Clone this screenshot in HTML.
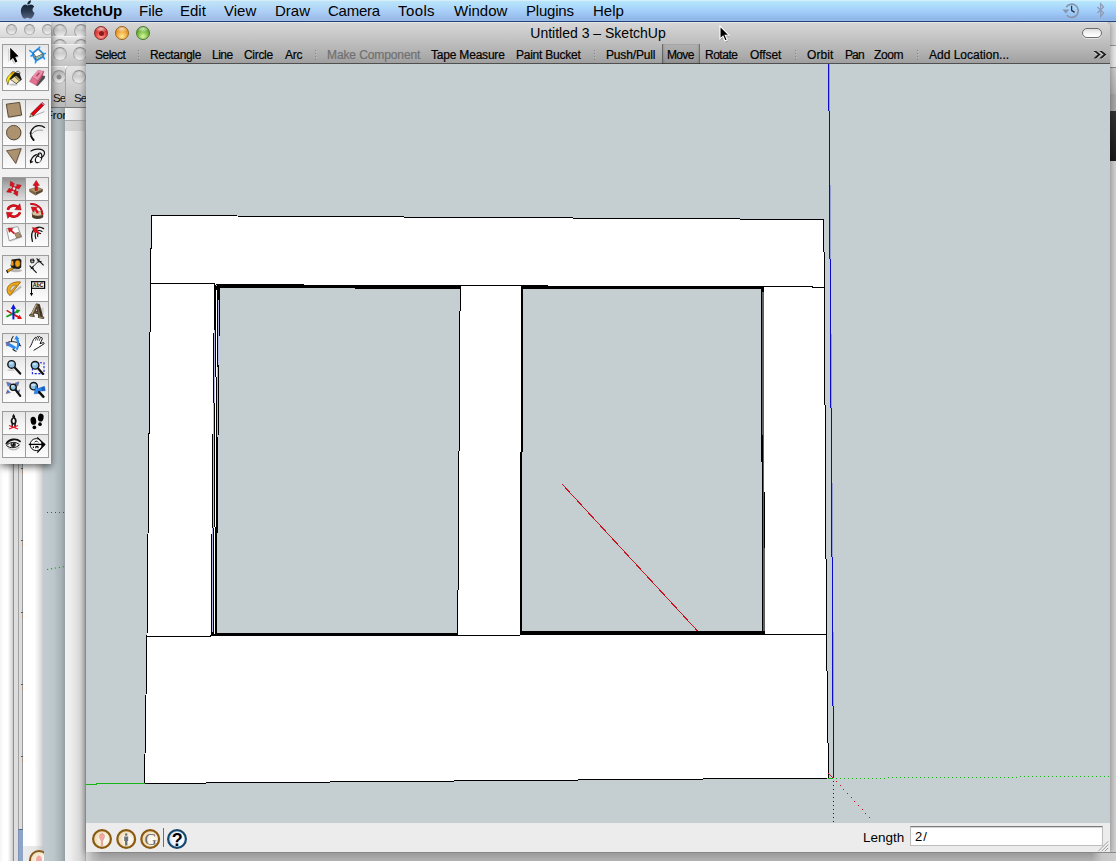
<!DOCTYPE html>
<html lang="en">
<head>
<meta charset="utf-8">
<title>Untitled 3 - SketchUp</title>
<style>
*{box-sizing:border-box;margin:0;padding:0}
html,body{width:1116px;height:861px;overflow:hidden;background:#fff;font-family:"Liberation Sans","DejaVu Sans",sans-serif;color:#000}
.abs{position:absolute}
#stage{position:relative;width:1116px;height:861px;overflow:hidden;background:#fff}
/* ---------- menu bar ---------- */
#menubar{left:0;top:0;width:1116px;height:22px;background:linear-gradient(90deg,rgba(232,216,226,.26) 0,rgba(232,216,226,.2) 18%,rgba(232,216,226,0) 55%),linear-gradient(#e2f5fd 0,#b6e6fb 7%,#acdcfc 28%,#a3cefa 52%,#97c0f0 76%,#8fb6e6 90%,#98bdec 100%);border-bottom:1px solid #21437a;z-index:50}
#menubar span{position:absolute;top:2px;font-size:15px;line-height:18px;white-space:nowrap;color:#000}
#menubar span.b{font-weight:bold}
/* ---------- background windows ---------- */
.bgwin{background:#fff}
/* ---------- main window ---------- */
#main{left:86px;top:22px;width:1024px;height:830px;background:#c5cfd2;box-shadow:0 0 6px 1px rgba(0,0,0,.35);z-index:20;border-radius:5px 5px 0 0;overflow:hidden}
#titlebar{left:0;top:0;width:1024px;height:42px;background:linear-gradient(#d6d6d6 0,#c3c3c3 40%,#b0b0b0 75%,#a0a0a0 100%);border-bottom:1px solid #505050;border-top:1px solid #e6e6e6}
#title{left:0;top:2px;width:1024px;text-align:center;font-size:14px;line-height:16px;color:#000}
.tl{width:14px;height:14px;border-radius:50%;top:3px}
#tbar span{position:absolute;top:24.5px;font-size:12px;letter-spacing:-.33px;line-height:14px;white-space:nowrap;color:#000;-webkit-text-stroke:.2px #000}
#tbar span.dis{color:#707070;-webkit-text-stroke:.2px #707070}
.sep{position:absolute;top:27px;width:2px;height:10px;background:repeating-linear-gradient(180deg,#868686 0,#868686 1px,rgba(0,0,0,0) 1px,rgba(0,0,0,0) 3px) left/1px 100% no-repeat,repeating-linear-gradient(180deg,rgba(0,0,0,0) 0,rgba(0,0,0,0) 1px,rgba(255,255,255,.2) 1px,rgba(255,255,255,.2) 2px,rgba(0,0,0,0) 2px,rgba(0,0,0,0) 3px) right/1px 100% no-repeat}
#canvas{left:0;top:42px;width:1024px;height:759px;background:#c5cfd2;overflow:hidden}
#status{left:0;top:801px;width:1024px;height:29px;background:#ececec}
#status .lbl{left:777px;top:7px;font-size:13.5px;line-height:16px}
#vcb{left:824px;top:3px;width:193px;height:20px;background:#fff;border:1px solid #bdbdbd;border-top:1px solid #7a7a7a;box-shadow:inset 0 1px 1px rgba(0,0,0,.18);font-size:13px;letter-spacing:1px;line-height:19px;padding-left:4px}
/* ---------- palette ---------- */
#palette{left:0;top:22px;width:51px;height:442px;background:#f1f1f1;z-index:30;box-shadow:1px 3px 7px rgba(0,0,0,.55)}
#ptitle{left:0;top:0;width:51px;height:16px;background:linear-gradient(#eeeeee,#d9d9d9);border-bottom:1px solid #c2c2c2;overflow:hidden}
.cell{position:absolute;width:24px;height:24px;border:1px solid #9c9c9c;background:linear-gradient(#e6e6e6 0,#f3f3f3 50%,#fcfcfc 100%)}
.cell svg{position:absolute;left:0;top:0;width:22px;height:22px;overflow:visible}
.gl{width:11px;height:11px;border-radius:50%;border:1px solid #a6a6a6;border-top-color:#8e8e8e;border-bottom-color:#bcbcbc;background:radial-gradient(ellipse 45% 30% at 50% 18%,rgba(255,255,255,.55) 0,rgba(255,255,255,0) 100%),linear-gradient(#b0b0b0 0,#cdcdcd 45%,#f0f0f0 100%)}
</style>
</head>
<body>
<div id="stage">

<!-- BG-START -->
<div id="bgwins" class="abs" style="left:0;top:0;width:1116px;height:861px;z-index:1">
 <!-- far-left window column (under palette) -->
 <div class="abs" style="left:0;top:22px;width:14px;height:839px;background:linear-gradient(90deg,#f4f4f4 0,#ffffff 25%,#ffffff 55%,#d9d9d9 85%,#b5b5b5 100%)"></div>
 <div class="abs" style="left:13px;top:22px;width:10px;height:839px;background:#dddddd;border-left:1px solid #8f8f8f;border-right:1px solid #9a9a9a"></div>
 <div class="abs" style="left:18px;top:22px;width:1px;height:839px;background:#a2a2a2"></div>
 <div class="abs" style="left:18px;top:829px;width:5px;height:32px;background:#8da6c8;border-left:1px solid #7f95b8;border-top:1px solid #5a6e8c"></div>
 <div class="abs" style="left:23px;top:22px;width:21px;height:839px;background:linear-gradient(90deg,#ffffff 0,#ffffff 55%,#e4e4e4 80%,#c4c4c4 100%)"></div>
 <div class="abs" style="left:23px;top:846px;width:21px;height:15px;background:linear-gradient(90deg,#ececec 0,#e6e6e6 60%,#c4c4c4 100%)"></div>
 <div class="abs" style="left:29px;top:850px;width:20px;height:20px;border-radius:50%;border:2px solid #8a5a1c;background:radial-gradient(ellipse 22% 30% at 50% 48%,#f4a8a2 0,#f4a8a2 70%,rgba(244,168,162,0) 100%),radial-gradient(circle at 60% 55%,#ffffff 0,#f6ecd6 50%,#e6d2a4 100%)"></div>
 <!-- ticks -->
 <div class="abs" style="left:21px;top:468px;width:2px;height:1px;background:#555"></div><div class="abs" style="left:22px;top:471px;width:1px;height:3px;background:#c08040;opacity:.55"></div>
 <div class="abs" style="left:21px;top:540px;width:2px;height:1px;background:#555"></div><div class="abs" style="left:22px;top:543px;width:1px;height:3px;background:#c08040;opacity:.55"></div>
 <div class="abs" style="left:21px;top:612px;width:2px;height:1px;background:#555"></div><div class="abs" style="left:22px;top:615px;width:1px;height:3px;background:#c08040;opacity:.55"></div>
 <div class="abs" style="left:21px;top:684px;width:2px;height:1px;background:#555"></div><div class="abs" style="left:22px;top:687px;width:1px;height:3px;background:#c08040;opacity:.55"></div>
 <div class="abs" style="left:21px;top:756px;width:2px;height:1px;background:#555"></div><div class="abs" style="left:22px;top:759px;width:1px;height:3px;background:#c08040;opacity:.55"></div>
 <!-- blue-gray canvas column x44-65 -->
 <div class="abs" style="left:44px;top:108px;width:21px;height:753px;background:linear-gradient(90deg,#c2ccd0 0,#bcc7cb 45%,#a9b4b9 80%,#949fa4 100%)"></div>
 <div class="abs" style="left:47px;top:512px;width:18px;height:1px;background:repeating-linear-gradient(90deg,#d01818 0,#d01818 1px,transparent 1px,transparent 4px)"></div>
 <svg class="abs" style="left:44px;top:560px" width="22" height="14"><line x1="3" y1="9.5" x2="21" y2="6.5" stroke="#14b414" stroke-width="1.2" stroke-dasharray="1.2 2.8"/></svg>
 <!-- white/shadow column x65-86 -->
 <div class="abs" style="left:65px;top:131px;width:21px;height:730px;background:linear-gradient(90deg,#f2f2f2 0,#ececec 30%,#d9d9d9 70%,#c2c2c2 94%,#9a9a9a 100%)"></div>
 <!-- stacked title/toolbars x51-86 -->
 <div class="abs" style="left:51px;top:22px;width:35px;height:15px;background:linear-gradient(#e4e4e4,#cfcfcf)"></div>
 <div class="gl abs" style="left:53px;top:24px;width:14px;height:14px"></div><div class="gl abs" style="left:74px;top:24px;width:14px;height:14px"></div>
 <div class="abs" style="left:51px;top:36px;width:35px;height:9px;background:linear-gradient(#e8e8e8,#cdcdcd);border-top:1px solid #f4f4f4;overflow:hidden"><div class="gl abs" style="left:2px;top:2px;width:14px;height:14px"></div><div class="gl abs" style="left:23px;top:2px;width:14px;height:14px"></div></div>
 <div class="abs" style="left:51px;top:44px;width:35px;height:22px;background:linear-gradient(#e2e2e2,#c2c2c2);border-top:1px solid #f0f0f0"></div>
 <div class="gl abs" style="left:53px;top:47px;width:14px;height:14px"></div><div class="gl abs" style="left:73px;top:47px;width:14px;height:14px"></div>
 <div class="abs" style="left:51px;top:66px;width:14px;height:42px;background:linear-gradient(#dadada,#c6c6c6 60%,#b9b9b9);border-top:1px solid #ececec;border-bottom:1px solid #777"></div>
 <div class="gl abs" style="left:52px;top:70px;width:14px;height:14px;background:radial-gradient(circle at 50% 50%,#8c8c8c 0,#8c8c8c 24%,rgba(0,0,0,0) 34%),linear-gradient(#b0b0b0 0,#cdcdcd 45%,#ececec 100%)"></div>
 <div class="abs" style="left:65px;top:66px;width:21px;height:42px;border-top-left-radius:5px;background:linear-gradient(#e4e4e4,#cecece 55%,#bcbcbc);border-left:1px solid #a4a4a4;border-bottom:1px solid #777"></div>
 <div class="gl abs" style="left:72px;top:70px;width:14px;height:14px"></div>
 <div class="abs" style="left:53px;top:91px;width:12px;overflow:hidden;font-size:11.5px;letter-spacing:-.8px;line-height:14px;color:#111">Se</div>
 <div class="abs" style="left:74px;top:91px;font-size:11.5px;letter-spacing:-.8px;line-height:14px;color:#111">Se</div>
 <div class="abs" style="left:46px;top:108px;width:19px;overflow:hidden;font-size:11px;line-height:14px;color:#111;white-space:nowrap;-webkit-text-stroke:.2px #111">Front</div>
 <div class="abs" style="left:65px;top:108px;width:21px;height:13px;background:linear-gradient(90deg,#f4f4f4,#dcdcdc 70%,#bdbdbd);border-bottom:1px solid #aaa"></div>
 <div class="abs" style="left:65px;top:121px;width:21px;height:10px;background:linear-gradient(90deg,#dadada,#cccccc 70%,#b4b4b4)"></div>
 <!-- right edge strip -->
 <div class="abs" style="left:1108px;top:22px;width:8px;height:839px;background:#d2d2d2"></div>
 <div class="abs" style="left:1108px;top:22px;width:8px;height:24px;background:#dcdcdc;border-bottom:1px solid #999"></div>
 <div class="abs" style="left:1108px;top:46px;width:8px;height:22px;background:#ececec;border-bottom:1px solid #8a8a8a"></div>
 <div class="abs" style="left:1108px;top:68px;width:8px;height:26px;background:linear-gradient(#cfcfcf,#b4b4b4)"></div>
 <div class="abs" style="left:1108px;top:94px;width:8px;height:17px;background:#a9a9a9"></div>
 <div class="abs" style="left:1108px;top:111px;width:8px;height:50px;background:linear-gradient(#333,#1a1a1a)"></div>
 <!-- bottom shadow strip -->
</div>
<!-- BG-END -->

<!-- MENUBAR -->
<div id="menubar" class="abs">
<span class="b" style="left:53px">SketchUp</span>
<span style="left:139px">File</span>
<span style="left:180px">Edit</span>
<span style="left:224px">View</span>
<span style="left:275px">Draw</span>
<span style="left:328px;letter-spacing:-.25px">Camera</span>
<span style="left:398px;letter-spacing:.4px">Tools</span>
<span style="left:454px">Window</span>
<span style="left:526px;letter-spacing:-.2px">Plugins</span>
<span style="left:593px">Help</span>
<svg class="abs" style="left:19px;top:0px" width="18" height="20.5" viewBox="0 0 100 100" preserveAspectRatio="none">
 <defs><linearGradient id="apg" x1="0" y1="0" x2="0" y2="1"><stop offset="0" stop-color="#0c1826"/><stop offset=".55" stop-color="#26364c"/><stop offset="1" stop-color="#55647c"/></linearGradient></defs>
 <path d="M66,1 C68,12 58,23 46,22 C45,11 55,2 66,1 Z M47,27 C52,27 57,22 65,22 C73,22 80,26 84,33 C72,40 72,57 86,63 C83,72 77,83 70,89 C65,93 60,91 54,88 C49,86 45,86 40,88 C35,91 31,93 26,89 C13,78 5,52 15,36 C20,27 29,22 37,22 C42,22 45,27 47,27 Z" fill="url(#apg)"/>
</svg>
<svg class="abs" style="left:1058px;top:1px" width="56" height="20" viewBox="1058 1 56 20">
 <path d="M1066.2,7.2 A6.6,6.6 0 1 1 1066.8,15.2" fill="none" stroke="#8796ad" stroke-width="1.7"/>
 <polygon points="1062.4,9.6 1069.4,9.6 1065.8,13.6" fill="#8796ad"/>
 <path d="M1071.6,5.8 L1071.6,10.4 L1074.6,12.4" fill="none" stroke="#2c3440" stroke-width="1.3"/>
 <path d="M1097.4,7 L1103.6,13 L1100.6,16.6 L1100.6,3.6 L1103.6,7 L1097.4,13" fill="none" stroke="#8d9cb4" stroke-width="1.2"/>
</svg>
</div>

<div class="abs" style="left:86px;top:852px;width:1030px;height:9px;z-index:25;background:linear-gradient(#7c7c7c 0,#9a9a9a 14%,#a2a2a2 40%,#b2b2b2 100%)"></div>
<div class="abs" style="left:86px;top:852px;width:16px;height:9px;z-index:26;background:linear-gradient(90deg,rgba(214,214,214,.95) 0,rgba(200,200,200,.55) 45%,rgba(190,190,190,0) 100%)"></div>
<div class="abs" style="left:1092px;top:853px;width:24px;height:8px;z-index:26;background:linear-gradient(90deg,rgba(200,200,200,0),#c6c6c6 40%,#cecece)"></div>
<!-- MAIN WINDOW -->
<div id="main" class="abs">
 <div id="titlebar" class="abs">
  <div id="title" class="abs">Untitled 3 &#8211; SketchUp</div>
  <div class="tl abs" style="left:8px;background:radial-gradient(ellipse 55% 32% at 50% 14%,rgba(255,255,255,.7),rgba(255,255,255,0)),radial-gradient(circle at 50% 78%,#ff9e98 0,#e2433f 48%,#a8221f 100%);border:1px solid #8a2a27"><div class="abs" style="left:3.5px;top:3.5px;width:5px;height:5px;border-radius:50%;background:#8c1a18"></div></div>
  <div class="tl abs" style="left:29px;background:radial-gradient(ellipse 55% 32% at 50% 14%,rgba(255,255,255,.7),rgba(255,255,255,0)),radial-gradient(circle at 50% 78%,#ffe99a 0,#eda12e 52%,#bd6e14 100%);border:1px solid #9a6418"></div>
  <div class="tl abs" style="left:50px;background:radial-gradient(ellipse 55% 32% at 50% 14%,rgba(255,255,255,.7),rgba(255,255,255,0)),radial-gradient(circle at 50% 78%,#d6f7a2 0,#74b83c 52%,#3f8020 100%);border:1px solid #4d7a2a"></div>
  <div class="abs" style="left:996px;top:5px;width:20px;height:10px;border-radius:5px;border:1px solid #6c6c6c;background:linear-gradient(#dcdcdc 0,#f6f6f6 55%,#ffffff 100%);box-shadow:0 1px 0 rgba(255,255,255,.6)"></div>
  <svg class="abs" style="left:1004px;top:26px" width="18" height="13" viewBox="1090 48 18 13">
   <path d="M1093.4,51 L1096.2,51 L1100.6,54.5 L1096.2,58 L1093.4,58 L1097.8,54.5 Z M1099.2,51 L1102,51 L1106.4,54.5 L1102,58 L1099.2,58 L1103.6,54.5 Z" fill="#fff" opacity=".6"/>
   <path d="M1093.4,50 L1096.2,50 L1100.6,53.5 L1096.2,57.6 L1093.4,57.6 L1097.8,53.5 Z M1099.2,50 L1102,50 L1106.4,53.5 L1102,57.6 L1099.2,57.6 L1103.6,53.5 Z" fill="#1e1e1e"/>
  </svg>
  <svg class="abs" style="left:628px;top:0px" width="20" height="24" viewBox="714 22 20 24">
   <polygon points="720.6,26 720.6,39.2 723.6,36.4 725.8,41.2 728,40.2 725.8,35.6 729.6,35.4" fill="#000" opacity=".25"/>
   <polygon points="720,25 720,37.8 723,35.2 725.1,39.9 727.3,38.9 725.2,34.3 729,34.2" fill="#000" stroke="#fff" stroke-width="1.1" stroke-linejoin="miter"/>
  </svg>
  <div id="tbar">
   <div class="abs" style="left:576px;top:21px;width:38px;height:20px;background:linear-gradient(rgba(0,0,0,.05),rgba(0,0,0,.09));border-left:1px solid rgba(40,40,40,.5);border-right:1px solid rgba(40,40,40,.42);box-shadow:inset 1px 0 2px rgba(0,0,0,.12),inset -1px 0 2px rgba(0,0,0,.10)"></div>
   <span style="left:9px;letter-spacing:-0.51px">Select</span>
   <span style="left:64px;letter-spacing:-0.34px">Rectangle</span>
   <span style="left:126px;letter-spacing:-0.5px">Line</span>
   <span style="left:158px;letter-spacing:-0.31px">Circle</span>
   <span style="left:199px;letter-spacing:-0.2px">Arc</span>
   <span class="dis" style="left:241px;letter-spacing:-0.1px">Make Component</span>
   <span style="left:345px;letter-spacing:-0.2px">Tape Measure</span>
   <span style="left:430px;letter-spacing:-0.24px">Paint Bucket</span>
   <span style="left:520px;letter-spacing:-0.16px">Push/Pull</span>
   <span style="left:581px;letter-spacing:-0.65px">Move</span>
   <span style="left:619px;letter-spacing:-0.49px">Rotate</span>
   <span style="left:664px;letter-spacing:-0.08px">Offset</span>
   <span style="left:721px;letter-spacing:0.1px">Orbit</span>
   <span style="left:759px;letter-spacing:-0.9px">Pan</span>
   <span style="left:788px;letter-spacing:-0.43px">Zoom</span>
   <span style="left:843px;letter-spacing:0.0px">Add Location...</span>
   <i class="sep" style="left:52px"></i>
   <i class="sep" style="left:229px"></i>
   <i class="sep" style="left:508px"></i>
   <i class="sep" style="left:709px"></i>
   <i class="sep" style="left:831px"></i>
  </div>
 </div>
 <div id="canvas" class="abs">
<!-- CANVAS-SVG-START -->
<svg class="abs" style="left:0;top:0" width="1024" height="759" viewBox="86 64 1024 759" shape-rendering="crispEdges">
 <!-- white face of the frame -->
 <polygon points="151.5,215.5 823.8,219.5 826.5,634 828.5,778 144.5,783.5 147,636 150.5,283.5" fill="#ffffff" stroke="#000" stroke-width="1"/>
 <!-- openings (background shows through) -->
 <polygon points="214.5,284.5 460,285.5 458,634.5 211,635.5" fill="#c5cfd2"/>
 <polygon points="521,285.5 763,286.5 764.5,634 520,634" fill="#c5cfd2"/>
 <!-- beam lines -->
 <polyline points="150.5,283.5 215,284" fill="none" stroke="#000"/>
 <polyline points="460,285.6 521,285.7" fill="none" stroke="#000"/>
 <polyline points="763,286.5 812,286.5 812,287.5 824.5,287.5" fill="none" stroke="#000"/>
 <polyline points="147,636.5 211,636.2" fill="none" stroke="#000"/>
 <polyline points="457,635.5 520,635" fill="none" stroke="#000"/>
 <polyline points="764,634.5 826.5,634.5" fill="none" stroke="#000"/>
 <!-- left opening edges -->
 <polygon points="215,284 460.5,285.4 460.5,288.9 219,288" fill="#000"/>
 <polygon points="211,633 458,632.5 458,636 211,636.5" fill="#000"/>
 <polyline points="460.2,286 457.7,635" fill="none" stroke="#000" stroke-width="1"/>
 <polygon points="214,284 220,288 216.5,634 210.5,636" fill="#000"/>
 <polyline points="216.6,290 214.3,634" fill="none" stroke="#ffffff" stroke-width="1"/>
 <polyline points="214.6,330 212.2,632" fill="none" stroke="#b4bce6" stroke-width="1"/><polyline points="218.5,300 217.5,437" fill="none" stroke="#b4bce6" stroke-width="1"/>
 <!-- right opening edges -->
 <polygon points="521,285.4 763.5,286.4 763.5,289.4 521,288.9" fill="#000"/>
 <polygon points="520,631 764,631 764,634.5 520,634.5" fill="#000"/>
 <polygon points="521,286 523,286 522,634 520,634" fill="#000"/>
 <polygon points="761,287 763.8,287 765,634 762,634" fill="#000"/>
 <polyline points="762.8,292 764,631" fill="none" stroke="#606060" stroke-width="1.6"/>
 <!-- red guide line -->
 <line x1="562" y1="484" x2="697.5" y2="631" stroke="#c8141e" stroke-width="1"/>
 <!-- axes -->
 <polyline points="828.7,64 833.5,778" fill="none" stroke="#0a0ac8" stroke-width="1"/><polyline points="829.2,64 834,778" fill="none" stroke="#0a0ac8" stroke-width="1" opacity=".25"/>
 <polyline points="86,784.5 96,784.5 96,783.5 144.5,783.5" fill="none" stroke="#14b414" stroke-width="1"/>
 <line x1="828" y1="778.5" x2="833" y2="778.5" stroke="#14b414"/>
 <line x1="828" y1="773" x2="833" y2="778" stroke="#c8141e" shape-rendering="auto"/>
 <line x1="836" y1="778.5" x2="886" y2="778.5" stroke="#14b414" stroke-width="1" stroke-dasharray="1 3"/>
 <line x1="888" y1="777.5" x2="1018" y2="777.5" stroke="#14b414" stroke-width="1" stroke-dasharray="1 3"/>
 <line x1="1020" y1="776.5" x2="1110" y2="776.5" stroke="#14b414" stroke-width="1" stroke-dasharray="1 3"/>
 <line x1="833.5" y1="781" x2="833.5" y2="823" stroke="#0a0ac8" stroke-width="1" stroke-dasharray="1 3"/>
 <g fill="#c8141e"><rect x="836" y="781" width="1" height="1"/><rect x="840" y="785" width="1" height="1"/><rect x="843" y="789" width="1" height="1"/><rect x="847" y="793" width="1" height="1"/><rect x="851" y="797" width="1" height="1"/><rect x="854" y="801" width="1" height="1"/><rect x="858" y="805" width="1" height="1"/><rect x="862" y="809" width="1" height="1"/><rect x="865" y="813" width="1" height="1"/><rect x="869" y="817" width="1" height="1"/></g>
</svg>
<!-- CANVAS-SVG-END -->
 </div>
 <div id="status" class="abs">
<svg class="abs" style="left:0;top:0" width="110" height="29" viewBox="86 823 110 29">
   <defs>
    <radialGradient id="crm" cx=".62" cy=".55" r=".65"><stop offset="0" stop-color="#ffffff"/><stop offset=".5" stop-color="#f6ecd6"/><stop offset="1" stop-color="#e6d2a4"/></radialGradient>
    <radialGradient id="hlp" cx=".6" cy=".5" r=".7"><stop offset="0" stop-color="#ffffff"/><stop offset=".55" stop-color="#eef4fc"/><stop offset="1" stop-color="#9cc0ee"/></radialGradient>
   </defs>
   <circle cx="102" cy="839" r="8.9" fill="url(#crm)" stroke="#8a5a12" stroke-width="2.2"/>
   <circle cx="126.2" cy="839" r="8.9" fill="url(#crm)" stroke="#8a5a12" stroke-width="2.2"/>
   <circle cx="150.2" cy="839" r="8.9" fill="url(#crm)" stroke="#8a5a12" stroke-width="2.2"/>
   <path d="M102,833.6 C104.4,833.6 105,836.4 104,838.4 C103.4,839.6 102.8,840.4 102.6,841.6 L102.6,845.6 L101.4,845.6 L101.4,841.6 C101.2,840.4 100.6,839.6 100,838.4 C99,836.4 99.6,833.6 102,833.6 Z" fill="#f4a8a2" stroke="#c88a80" stroke-width=".5"/>
   <path d="M126.2,833.2 a1.3,1.3 0 1 1 -.01,0 Z M124.2,836.6 L128.2,836.6 L128.2,841 L127.4,841 L127.4,845.6 L125,845.6 L125,841 L124.2,841 Z" fill="#6c747c"/>
   <text x="150.6" y="845.4" text-anchor="middle" font-family="Liberation Serif,serif" font-size="17" fill="#6a6a66">G</text>
   <line x1="163.5" y1="828" x2="163.5" y2="847" stroke="#6e6e6e" stroke-width="1"/>
   <circle cx="177" cy="839" r="8.9" fill="url(#hlp)" stroke="#17476c" stroke-width="2.2"/>
   <text x="177.2" y="845.6" text-anchor="middle" font-family="Liberation Sans,sans-serif" font-weight="bold" font-size="18" fill="#000">?</text>
  </svg>
  <div class="lbl abs">Length</div>
  <div id="vcb" class="abs">2/</div>
  <svg class="abs" style="left:1010px;top:16px" width="13" height="13" viewBox="0 0 16 16"><path d="M3,15 L15,3 M7,15 L15,7 M11,15 L15,11" stroke="#7c7c7c" stroke-width="1.1" fill="none"/><path d="M4,15 L15,4 M8,15 L15,8 M12,15 L15,12" stroke="#fff" stroke-width=".8" fill="none" opacity=".8"/></svg>
 </div>
</div>

<!-- PALETTE -->
<div id="palette" class="abs">
 <div id="ptitle" class="abs">
  <div class="gl abs" style="left:6px;top:2px"></div>
  <div class="gl abs" style="left:24px;top:2px"></div>
  <div class="gl abs" style="left:42px;top:2px"></div>
 </div>
<!-- PC-START -->
 <div class="cell" style="left:2px;top:22px"><svg viewBox="0 0 22 22"><polygon points="5.4,3.4 5.4,17 8.6,14.4 11,19 13.6,17.8 11.4,13.2 15,12.4" fill="#9a9a9a" opacity=".55"/>
<polygon points="6.2,1.6 6.2,16.8 9.6,14 12,18.6 15,17.2 12.8,12.6 16.6,11.6" fill="#fff" opacity=".9"/>
<polygon points="7.2,2.8 7.2,15.4 10,13 12.4,17.6 14.4,16.6 12.2,12 15.6,11.2" fill="#000"/></svg></div>
 <div class="cell" style="left:25px;top:22px"><svg viewBox="0 0 22 22"><path d="M7.4,8.3 L3.8,5.6 M12.1,4.5 L13.6,2.2 M16.7,9.1 L19.2,8.4 M16.7,11.3 L18.4,13.8 M10.2,14.9 L9.4,17.8 M7.4,9.9 L5,11" stroke="#1e96ff" stroke-width="1.6" fill="none" stroke-linecap="round"/>
<polygon points="7.4,8.3 12.1,4.5 16.7,9.1 16.7,11.3 10.2,14.9 7.4,9.9" fill="none" stroke="#1e96ff" stroke-width="3" stroke-linejoin="miter"/>
<polygon points="7.4,8.3 12.1,4.5 16.7,9.1 9.9,12.1" fill="#ffffff" stroke="#3a2a1a" stroke-width=".6"/>
<polygon points="7.4,8.3 9.9,12.1 10.2,14.9 7.4,9.9" fill="#d4ecec" stroke="#3a2a1a" stroke-width=".5"/>
<polygon points="9.9,12.1 16.7,9.1 16.7,11.3 10.2,14.9" fill="#f4eee4" stroke="#3a2a1a" stroke-width=".5"/>
<line x1="10" y1="13.4" x2="16.7" y2="10.2" stroke="#20a8a8" stroke-width=".8"/></svg></div>
 <div class="cell" style="left:2px;top:45px"><svg viewBox="0 0 22 22"><ellipse cx="10.5" cy="16.6" rx="4.2" ry="1.2" fill="#a4a4a4" opacity=".6"/>
<path d="M13.4,3.8 C15.2,2.6 17.2,3.4 16.8,6.2" fill="none" stroke="#4a4a4a" stroke-width="1"/>
<polygon points="9.3,3.5 16.4,5.2 18.8,11.4 13.4,15.9 7.2,11.6 6,8.2" fill="#181818"/>
<polygon points="8,11.4 11.6,8.8 16.2,13 13.2,15.3" fill="#ecdca0"/>
<polygon points="11.6,8.8 13.2,7.8 17.4,11.6 16.2,13" fill="#a89868"/>
<path d="M10.8,3.4 C7,5.6 3.4,9.6 3.4,12.4 C3.6,14 4.6,14.4 4.8,16.8 C5.6,14.6 5.6,13 6.4,11.4 C7.6,9 10,6.6 12,4.2 Z" fill="#f8e400" stroke="#2a2200" stroke-width=".5"/>
<path d="M10.6,4.2 C9.6,5 9,5.6 8.4,6.6" fill="none" stroke="#f08a00" stroke-width="1.2"/></svg></div>
 <div class="cell" style="left:25px;top:45px"><svg viewBox="0 0 22 22"><polygon points="10.4,17.6 16.4,7.4 19.2,8 18.6,10.4 11.8,18" fill="#222" opacity=".8"/>
<polygon points="6.1,8.9 3.5,13.6 10.4,17.5 12.1,12.6" fill="#e2708e" stroke="#8a3450" stroke-width=".3"/>
<polygon points="6.1,8.9 12.1,2.2 17.9,3.3 12.1,12.6" fill="#f08eaa" stroke="#8a3450" stroke-width=".3"/>
<polygon points="12.1,12.6 17.9,3.3 16.6,7.6 10.4,17.5" fill="#c4506f" stroke="#8a3450" stroke-width=".3"/>
<line x1="10.4" y1="8.2" x2="13.4" y2="4.8" stroke="#a83c5c" stroke-width="1.3"/></svg></div>
 <div class="cell" style="left:2px;top:77px"><svg viewBox="0 0 22 22"><polygon points="4.2,5 17.4,3.2 19.6,16 6.4,18.2" fill="#999" opacity=".35"/>
<polygon points="3.3,4.2 16.6,2.4 18.6,15 5.4,17.2" fill="#ad9270" stroke="#4e3e2c" stroke-width=".9" stroke-linejoin="round"/></svg></div>
 <div class="cell" style="left:25px;top:77px"><svg viewBox="0 0 22 22"><line x1="6" y1="16.6" x2="18.5" y2="11.6" stroke="#999" stroke-width="1" opacity=".8"/>
<polygon points="3.6,17.2 5,13.6 7.2,15.8" fill="#e8c880" stroke="#333" stroke-width=".4"/>
<polygon points="3.6,17.2 4.2,15.7 5.1,16.6" fill="#222"/>
<polygon points="5,13.6 15.2,3.4 17.4,5.6 7.2,15.8" fill="#e8000c" stroke="#50040a" stroke-width=".6"/>
<polygon points="15.2,3.4 16.4,2.2 18.6,4.4 17.4,5.6" fill="#f06aa8" stroke="#50040a" stroke-width=".4"/></svg></div>
 <div class="cell" style="left:2px;top:100px"><svg viewBox="0 0 22 22"><circle cx="11.4" cy="10.4" r="7.3" fill="#999" opacity=".4"/>
<circle cx="10.7" cy="9.6" r="7.2" fill="#ad9270" stroke="#4e3e2c" stroke-width=".9"/></svg></div>
 <div class="cell" style="left:25px;top:100px"><svg viewBox="0 0 22 22"><path d="M18.6,4.4 C15,1.6 9,1.8 5.6,7.2 C3.6,10.6 4.6,14.6 7.6,17" fill="none" stroke="#111" stroke-width="1.3" stroke-linecap="round"/>
<path d="M4.6,10 C4.8,13 5.6,15 7.6,17" fill="none" stroke="#111" stroke-width="1.8" stroke-linecap="round"/>
<path d="M16.6,7.4 C12.6,6.2 7.6,7.6 5,12.4" fill="none" stroke="#999" stroke-width="1" stroke-linecap="round"/></svg></div>
 <div class="cell" style="left:2px;top:123px"><svg viewBox="0 0 22 22"><polygon points="4.4,5.4 19,3.2 13.5,18.2" fill="#999" opacity=".35"/>
<polygon points="3.6,4.7 18.2,2.5 12.7,17.5" fill="#ad9270" stroke="#4e3e2c" stroke-width=".8" stroke-linejoin="round"/></svg></div>
 <div class="cell" style="left:25px;top:123px"><svg viewBox="0 0 22 22"><path d="M5,5 C9,2 17,2.6 18.4,6 C19.4,9 16,12 13.6,11.4 C11,10.8 11.4,7.4 13.6,7 C16,6.6 16.6,10.8 15,14 C13.6,17 9.6,17.6 9.4,14.6 C9.2,12 11.6,9 13,8.6" fill="none" stroke="#111" stroke-width="1.2" stroke-linecap="round"/>
<path d="M10.4,8.6 C7,10 5,13 4.6,16.4 M4.4,14.6 L4.6,16.6 L6.6,15.8" fill="none" stroke="#111" stroke-width="1.2" stroke-linecap="round"/>
<ellipse cx="12.6" cy="13.6" rx="2.3" ry="2.6" fill="#fff" opacity=".9"/></svg></div>
 <div class="cell" style="left:2px;top:155px;background:linear-gradient(#8f8f8f 0,#b0b0b0 35%,#d0d0d0 80%,#dedede 100%)"><svg viewBox="0 0 22 22"><polygon points="9.7,10.3 8.3,7.4 7.0,8.0 7.6,3.3 11.6,5.9 10.3,6.5 11.7,9.4" fill="#e0101c" stroke="#9c0a12" stroke-width=".5"/><polygon points="11.3,9.3 14.2,7.9 13.6,6.6 18.3,7.2 15.7,11.2 15.1,9.9 12.2,11.3" fill="#e0101c" stroke="#9c0a12" stroke-width=".5"/><polygon points="12.3,10.9 13.7,13.8 15.0,13.2 14.4,17.9 10.4,15.3 11.7,14.7 10.3,11.8" fill="#e0101c" stroke="#9c0a12" stroke-width=".5"/><polygon points="10.7,11.9 7.8,13.3 8.4,14.6 3.7,14.0 6.3,10.0 6.9,11.3 9.8,9.9" fill="#e0101c" stroke="#9c0a12" stroke-width=".5"/><circle cx="11" cy="10.6" r="1.3" fill="#e8e8e8"/></svg></div>
 <div class="cell" style="left:25px;top:155px"><svg viewBox="0 0 22 22"><polygon points="3.2,11.4 11,9.2 16.8,11.4 9.4,14.6" fill="#b89868" stroke="#4a3a26" stroke-width=".5"/>
<polygon points="3.2,11.4 9.4,14.6 9.4,17.6 3.4,13.8" fill="#7a6244"/>
<polygon points="9.4,14.6 16.8,11.4 16.6,13.8 9.4,17.6" fill="#5a4630"/>
<polygon points="9,12.4 9,7.4 7,7.4 10.2,2.4 13.4,7.4 11.4,7.4 11.4,12.4" fill="#e0101c" stroke="#9c0a12" stroke-width=".5"/></svg></div>
 <div class="cell" style="left:2px;top:178px"><svg viewBox="0 0 22 22"><path d="M4.8,8.8 C6,4.6 11.6,3.2 15,6.2" fill="none" stroke="#9c0a12" stroke-width="2.5"/>
<path d="M4.8,8.8 C6,4.6 11.6,3.2 15,6.2" fill="none" stroke="#e0101c" stroke-width="1.7"/>
<polygon points="11.8,8.6 18.2,9 16.8,2.8" fill="#e0101c" stroke="#9c0a12" stroke-width=".5"/>
<path d="M17,11.4 C15.6,15.6 10,17 6.6,14" fill="none" stroke="#9c0a12" stroke-width="2.5"/>
<path d="M17,11.4 C15.6,15.6 10,17 6.6,14" fill="none" stroke="#e0101c" stroke-width="1.7"/>
<polygon points="9.8,11.6 3.4,11.2 4.8,17.4" fill="#e0101c" stroke="#9c0a12" stroke-width=".5"/></svg></div>
 <div class="cell" style="left:25px;top:178px"><svg viewBox="0 0 22 22"><ellipse cx="11.6" cy="15.4" rx="5.6" ry="2.6" fill="#4a3a28"/>
<rect x="6" y="12.6" width="11.2" height="2.8" fill="#5a4630"/>
<ellipse cx="11.6" cy="12.6" rx="5.6" ry="2.4" fill="#d8c4a0" stroke="#5a4630" stroke-width=".5"/>
<path d="M4.4,3 C11,2.4 16.6,7 16.2,13.6" fill="none" stroke="#9c0a12" stroke-width="1.9"/>
<path d="M4.4,3 C11,2.4 16.6,7 16.2,13.6" fill="none" stroke="#e0101c" stroke-width="1.2"/>
<path d="M11.6,12.4 C11.4,10.4 10.4,9 9.2,8" fill="none" stroke="#e0101c" stroke-width="2.2"/>
<polygon points="5.2,6 11.6,6.2 7,11" fill="#e0101c" stroke="#9c0a12" stroke-width=".5"/></svg></div>
 <div class="cell" style="left:2px;top:201px"><svg viewBox="0 0 22 22"><polygon points="4.6,5.6 15.6,3.4 19.4,13.4 7.2,17.8" fill="#999" opacity=".45"/>
<polygon points="3.6,4.8 14.6,2.6 18.4,12.4 6.2,16.8" fill="#ffffff" stroke="#8a8a8a" stroke-width=".8"/>
<polygon points="11.6,9.6 15.6,8.2 18.4,12.4 13.6,14" fill="#ad9270" stroke="#4e3e2c" stroke-width=".5"/>
<line x1="11.4" y1="9.6" x2="7.4" y2="5.8" stroke="#e0101c" stroke-width="1.8"/>
<polygon points="5,4 10.2,4.6 6.2,8.4" fill="#e0101c" stroke="#9c0a12" stroke-width=".4"/></svg></div>
 <div class="cell" style="left:25px;top:201px"><svg viewBox="0 0 22 22"><path d="M17.6,4.6 C12,0.8 3,5 6.4,17.4" fill="none" stroke="#111" stroke-width="1.3" stroke-linecap="round"/>
<path d="M16,7.4 C12,5 7.6,8 9.8,14.6" fill="none" stroke="#111" stroke-width="1.2" stroke-linecap="round"/>
<path d="M14.6,9.6 C12.6,8.6 10.8,10 11.8,12.6" fill="none" stroke="#111" stroke-width="1.1" stroke-linecap="round"/>
<line x1="13.2" y1="9.8" x2="9.6" y2="6.2" stroke="#e0101c" stroke-width="2"/>
<polygon points="6.4,3.4 12.4,4.4 8,8.8" fill="#e0101c" stroke="#9c0a12" stroke-width=".4"/></svg></div>
 <div class="cell" style="left:2px;top:233px"><svg viewBox="0 0 22 22"><ellipse cx="13" cy="14.6" rx="6" ry="1.6" fill="#8a8a8a" opacity=".6"/>
<polygon points="8.6,3.4 16.6,2.4 18.4,4 18.2,11.4 16,13 9,12.4 7.6,9.6" fill="#1c1c1c"/>
<ellipse cx="14.6" cy="7.6" rx="2.6" ry="3.4" fill="#f0a010" stroke="#6a4400" stroke-width=".4"/>
<polygon points="8,5.4 10.2,4.4 10.6,9.4 8.2,9.8" fill="#f0a010"/>
<polygon points="3.6,14.4 9.4,11.4 10.4,13 4.6,16.4" fill="#f0a010" stroke="#3a2a00" stroke-width=".5"/>
<line x1="3.6" y1="14" x2="4.8" y2="17" stroke="#222" stroke-width="1.2"/></svg></div>
 <div class="cell" style="left:25px;top:233px"><svg viewBox="0 0 22 22"><line x1="6" y1="11.6" x2="13.4" y2="4.4" stroke="#111" stroke-width=".9"/>
<line x1="10.6" y1="2.4" x2="17.6" y2="9.4" stroke="#111" stroke-width="1.1"/>
<line x1="3.6" y1="9.6" x2="10.6" y2="16.8" stroke="#111" stroke-width="1.1"/>
<path d="M11.4,5.2 L13.6,2.6 M12,6 L15.6,5.4 M4.8,13.2 L7.6,9.8 M4.6,11.2 L8,12.4" stroke="#111" stroke-width="1" fill="none"/>
<path d="M4.6,3.4 L7.6,3 L7.8,6.6 L5,6.8 Z M4,5 L8.6,4.6" stroke="#111" stroke-width=".9" fill="none"/></svg></div>
 <div class="cell" style="left:2px;top:256px"><svg viewBox="0 0 22 22"><polygon points="6.6,17.6 18.6,8.6 17.6,6.6 8,15" fill="#8a8a8a" opacity=".55"/>
<path d="M7,16.6 C2.6,13.6 3,7 8.6,4.4 C11.6,3 15,2.6 17.6,3 Z" fill="#f0aa18" stroke="#7a4c00" stroke-width=".7"/>
<path d="M7.6,12.4 C6.4,10.4 7.4,8 10,6.8 C11.2,6.2 12.6,6 13.6,6 Z" fill="#d8dde0" stroke="#7a4c00" stroke-width=".5"/>
<line x1="7.8" y1="15.4" x2="16.4" y2="4.2" stroke="#c07a00" stroke-width=".6"/></svg></div>
 <div class="cell" style="left:25px;top:256px"><svg viewBox="0 0 22 22"><rect x="5.6" y="2.7" width="13" height="6.6" fill="#fff" stroke="#000" stroke-width="1.2"/>
<text x="6.7" y="8.4" font-family="Liberation Sans,sans-serif" font-size="6.6" font-weight="bold" fill="#000" textLength="10.8" lengthAdjust="spacingAndGlyphs" text-rendering="geometricPrecision">AbC</text>
<line x1="5.5" y1="2.1" x2="5.5" y2="15.4" stroke="#000" stroke-width="1"/>
<polygon points="3.9,14 7.1,14 5.5,17.2" fill="#000"/></svg></div>
 <div class="cell" style="left:2px;top:279px"><svg viewBox="0 0 22 22"><line x1="3.6" y1="8.4" x2="10.6" y2="12.6" stroke="#c81010" stroke-width="1.4"/>
<line x1="3.4" y1="14.8" x2="14.6" y2="9.4" stroke="#10a018" stroke-width="1.8"/>
<polygon points="12.8,7.4 17.4,8 14.6,11.6" fill="#10a018"/>
<line x1="10.4" y1="12.4" x2="16" y2="15.4" stroke="#e01018" stroke-width="1.8"/>
<polygon points="14.2,17 19,17 16.6,12.8" fill="#e01018"/>
<line x1="10.4" y1="17.4" x2="10.4" y2="6" stroke="#1018e0" stroke-width="2"/>
<polygon points="7.8,7 13,7 10.4,2" fill="#1018e0"/></svg></div>
 <div class="cell" style="left:25px;top:279px"><svg viewBox="0 0 22 22"><polygon points="14.6,6.6 17.8,5.2 17.6,12.6 15.6,12.2" fill="#c0c0c0" opacity=".7"/>
<g transform="translate(0,-4.3) skewY(11)">
<path d="M3.6,16.4 L5.4,14.8 L10.2,4.2 L13.4,4.2 L16.4,15 L17.8,16.4 L17.6,17.4 L12.4,17.4 L12.6,16 L12,13.6 L8.4,13.6 L7.4,15.6 L8.4,16.6 L8.2,17.4 L3.6,17.4 Z M9.2,11.6 L11.6,11.6 L10.8,7.6 Z" fill="#6e5a40" stroke="#2e2418" stroke-width=".8" fill-rule="evenodd"/>
<path d="M10.4,4.8 L5.8,15" stroke="#c4b088" stroke-width="1.1"/>
<path d="M12.6,4.6 L15.4,15.6" stroke="#3a2c1c" stroke-width="1.4"/>
<path d="M4.2,16.9 L7.8,16.9 M12.8,16.9 L17.2,16.9" stroke="#a8946c" stroke-width=".7"/>
</g></svg></div>
 <div class="cell" style="left:2px;top:311px"><svg viewBox="0 0 22 22"><path d="M10.4,2 C8.6,4 8.2,6 8.6,7.8" stroke="#222" stroke-width="1.1" fill="none"/>
<path d="M3.6,9 C6,7 12,7 17,9.8" stroke="#222" stroke-width="1" fill="none"/>
<polygon points="16.2,9 18.6,12.6 15.2,11.6" fill="#222"/>
<path d="M4.4,10 C7,11 10,12.6 12.4,14.2" stroke="#2a8af0" stroke-width="3" fill="none"/>
<polygon points="2.8,8.2 6.8,8.6 3.8,12.2" fill="#2a8af0" stroke="#c03020" stroke-width=".4"/>
<path d="M13.8,4.4 C15.8,8 15.6,12 13.6,15.8" stroke="#2a8af0" stroke-width="2.2" fill="none"/>
<polygon points="11.2,5.6 13.4,1.6 16.4,5" fill="#2a8af0"/>
<path d="M9.6,14.8 C10.6,16.4 12,17.4 13.6,17.2" stroke="#222" stroke-width="1.2" fill="none"/></svg></div>
 <div class="cell" style="left:25px;top:311px"><svg viewBox="0 0 22 22"><path d="M3.6,13.6 C5.6,11 6.2,8 7.6,5.4 L9.6,3.2 L10.4,3.8 L11.6,2.4 L12.6,3 L13.6,2.4 L14.6,3.4 L15.8,3.6 L16.4,4.8 C15.6,6.6 14.8,8 14,9.6 L17.6,8.6 L18.2,9.6 C15,12 10.6,14.6 7.6,16.4" fill="#ffffff" stroke="#111" stroke-width="1" stroke-linejoin="round"/>
<path d="M10.4,3.8 L9.4,6.6 M12.6,3 L11.4,6.4 M14.6,3.4 L13.2,6.8" stroke="#111" stroke-width=".8" fill="none"/></svg></div>
 <div class="cell" style="left:2px;top:334px"><svg viewBox="0 0 22 22"><ellipse cx="8" cy="13.2" rx="3.6" ry="0.9" fill="#999" opacity=".45"/><line x1="11.26" y1="10.06" x2="17.2" y2="16.6" stroke="#111" stroke-width="2.2" stroke-linecap="round"/>
<circle cx="8.6" cy="7.4" r="3.8" fill="#8cc0e4" stroke="#151515" stroke-width="1.4"/>
<ellipse cx="8.0" cy="6.2" rx="2.09" ry="1.216" fill="#c8e4f6" opacity=".9"/></svg></div>
 <div class="cell" style="left:25px;top:334px"><svg viewBox="0 0 22 22"><rect x="6.4" y="5.8" width="11.6" height="10.8" fill="none" stroke="#2222e0" stroke-width="1.1" stroke-dasharray="2.2 1.5"/><line x1="11.76" y1="10.96" x2="17" y2="16.9" stroke="#111" stroke-width="2.2" stroke-linecap="round"/>
<circle cx="9.1" cy="8.3" r="3.8" fill="#8cc0e4" stroke="#151515" stroke-width="1.4"/>
<ellipse cx="8.5" cy="7.1000000000000005" rx="2.09" ry="1.216" fill="#c8e4f6" opacity=".9"/></svg></div>
 <div class="cell" style="left:2px;top:357px"><svg viewBox="0 0 22 22"><polygon points="3.6,2 8.2,3.4 5,6.4" fill="#2a8af0" stroke="#a03020" stroke-width=".4"/>
<polygon points="16,1.8 11.8,3.2 14.8,6.2" fill="#2a8af0" stroke="#a03020" stroke-width=".4"/>
<polygon points="3,13.6 7.4,12.6 4.6,9.8" fill="#2a8af0" stroke="#a03020" stroke-width=".4"/>
<polygon points="13.4,12.2 16.8,9.6 16,12.8" fill="#2a8af0" stroke="#a03020" stroke-width=".4"/><line x1="12.37" y1="9.469999999999999" x2="17.2" y2="15.9" stroke="#111" stroke-width="2.2" stroke-linecap="round"/>
<circle cx="10.2" cy="7.3" r="3.1" fill="#8cc0e4" stroke="#151515" stroke-width="1.4"/>
<ellipse cx="9.6" cy="6.1" rx="1.7050000000000003" ry="0.9920000000000001" fill="#c8e4f6" opacity=".9"/></svg></div>
 <div class="cell" style="left:25px;top:357px"><svg viewBox="0 0 22 22"><line x1="10.29" y1="8.79" x2="17.4" y2="16.8" stroke="#111" stroke-width="2.2" stroke-linecap="round"/>
<circle cx="7.7" cy="6.2" r="3.7" fill="#8cc0e4" stroke="#151515" stroke-width="1.4"/>
<ellipse cx="7.1000000000000005" cy="5.0" rx="2.035" ry="1.1840000000000002" fill="#c8e4f6" opacity=".9"/>
<polygon points="8.2,13.8 9.8,6 11.8,8.6 18.4,6.4 19.2,10.6 13.2,11.2 14.4,13.2" fill="#2a8af0" stroke="#1858b0" stroke-width=".5"/>
<polygon points="15.2,7.6 18.4,6.4 19.2,10.6 16,10.8" fill="#1c5cc8"/>
<line x1="13" y1="12" x2="17.4" y2="16.8" stroke="#111" stroke-width="2.2" stroke-linecap="round"/></svg></div>
 <div class="cell" style="left:2px;top:389px"><svg viewBox="0 0 22 22"><path d="M10.6,1.8 L12.2,4.6 L11.8,5.6 C14.2,7 14,10.2 12.8,12 L13,15.4 L8.2,15.4 L8.6,12 C7,10 7.4,7 9.6,5.6 L9.2,4.2 Z" fill="#111"/>
<path d="M10.6,6.4 C12.2,7.4 12,9.6 11.2,11.2 L9.8,10.6 C9.2,9 9.4,7.2 10.6,6.4 Z" fill="#fff"/>
<rect x="9.9" y="12.6" width="1.4" height="2.6" fill="#fff"/>
<path d="M6,13.6 L15,17 M15,13.6 L6,17" stroke="#f01020" stroke-width="1.1" fill="none"/></svg></div>
 <div class="cell" style="left:25px;top:389px"><svg viewBox="0 0 22 22"><ellipse cx="7.4" cy="8.8" rx="2.8" ry="4" transform="rotate(-8 7.4 8.8)" fill="#000"/>
<ellipse cx="8.4" cy="15.4" rx="1.9" ry="1.8" fill="#000"/>
<ellipse cx="14.8" cy="5.6" rx="2.8" ry="4" transform="rotate(8 14.8 5.6)" fill="#000"/>
<ellipse cx="14" cy="12.2" rx="1.8" ry="1.9" fill="#000"/></svg></div>
 <div class="cell" style="left:2px;top:412px"><svg viewBox="0 0 22 22"><path d="M3.4,8.6 C6,4 13.6,3 17,6.4" fill="none" stroke="#111" stroke-width="1.8" stroke-linecap="round"/>
<path d="M3.6,10.6 C6.6,6.6 13.6,6.4 16.4,9.8 C13,13.4 7,13.6 3.6,10.6 Z" fill="#f4f4f4" stroke="#111" stroke-width="1"/>
<circle cx="10.2" cy="9.6" r="2.6" fill="#333"/><circle cx="10.2" cy="9.6" r="1.2" fill="#000"/><circle cx="9.4" cy="8.8" r=".6" fill="#fff"/>
<path d="M5,12.6 C8,15.6 13,15.6 16.4,12" fill="none" stroke="#999" stroke-width="1.2" opacity=".7"/></svg></div>
 <div class="cell" style="left:25px;top:412px"><svg viewBox="0 0 22 22"><circle cx="10.2" cy="9.6" r="6" fill="#fff" stroke="#111" stroke-width="1"/>
<line x1="2.8" y1="9.4" x2="18.4" y2="9.4" stroke="#000" stroke-width="1.4"/>
<polyline points="11.2,2.4 18.8,9.5 11.2,17.6" fill="none" stroke="#000" stroke-width="1.2" stroke-linejoin="miter"/>
<polygon points="15.6,6.8 19.2,9.5 15.6,12.2" fill="#000"/>
<path d="M8.4,7.4 C9.4,5.8 11.2,5.8 12.2,7.4" fill="none" stroke="#000" stroke-width="1"/>
<path d="M7.4,11.4 L7.4,13 M9.6,11.6 L12.2,11.6 M9.8,11.6 L9.8,13.2 M12,11.6 L12,13.2" stroke="#000" stroke-width="1.1" fill="none"/></svg></div>
<!-- PC-END -->
</div>

</div>
</body>
</html>
